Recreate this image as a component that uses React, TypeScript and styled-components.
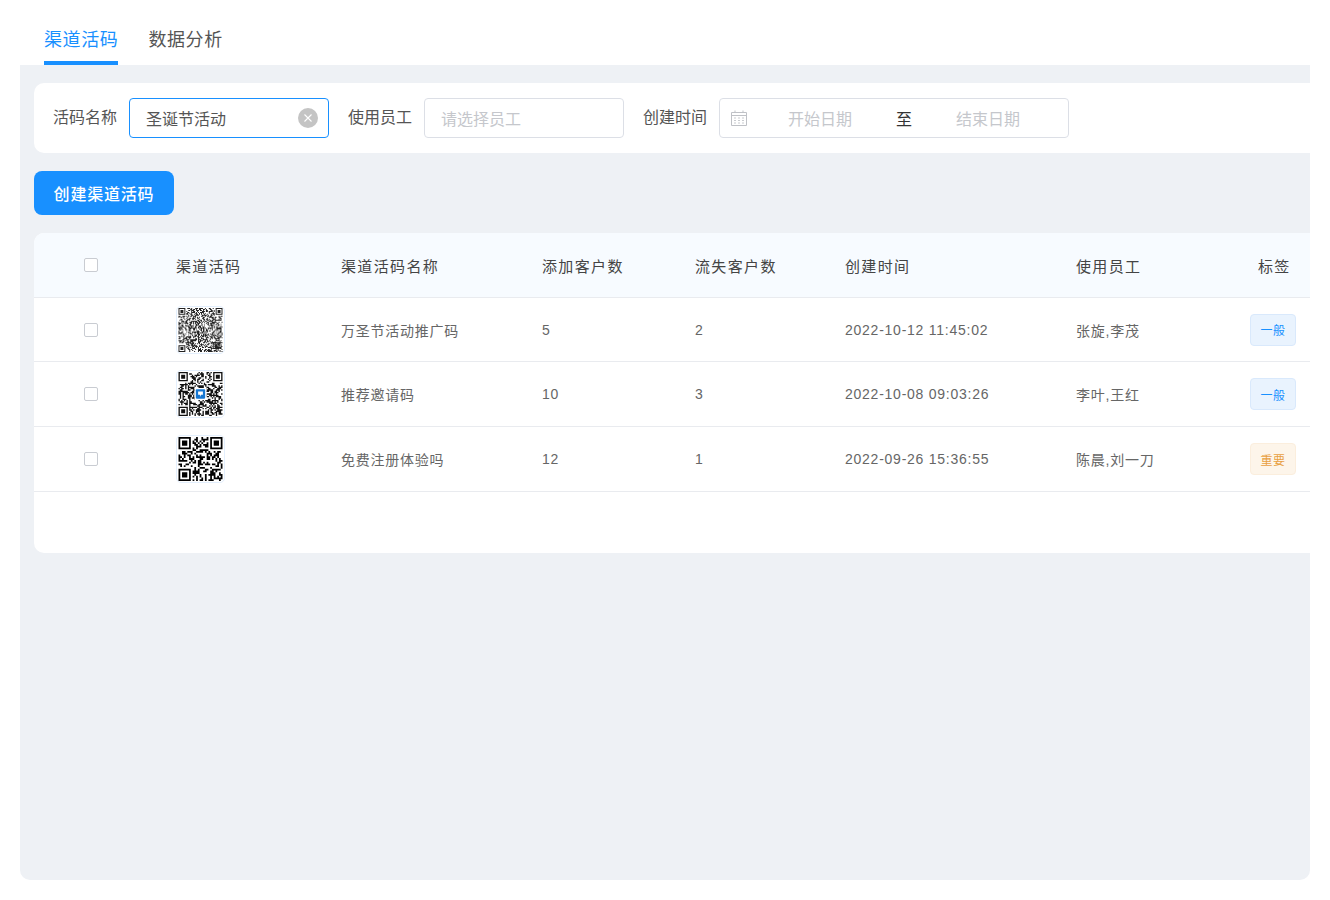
import React from 'react';
import styled, { createGlobalStyle } from 'styled-components';

const Global = createGlobalStyle`
  html, body { margin: 0; padding: 0; background: #fff; }
  body { font-family: "Liberation Sans", "Noto Sans CJK SC", sans-serif; color: #333; }
`;

const Page = styled.div`
  width: 1330px;
  height: 900px;
  padding: 0 20px 20px;
  box-sizing: border-box;
  display: flex;
  flex-direction: column;
`;
const Tabs = styled.div`
  height: 65px;
  display: flex;
  gap: 30px;
  padding-left: 24px;
  flex: none;
`;
const Tab = styled.div<{ $active?: boolean }>`
  font-size: 18px;
  letter-spacing: 0.6px;
  line-height: 26px;
  padding-top: 27px;
  box-sizing: border-box;
  height: 65px;
  color: ${p => (p.$active ? '#1890ff' : '#555')};
  border-bottom: 4px solid ${p => (p.$active ? '#1890ff' : 'transparent')};
`;
const Panel = styled.div`
  flex: 1;
  background: #eef1f5;
  border-radius: 0 0 10px 10px;
  padding: 18px 0 0 14px;
  overflow: hidden;
`;
const FilterCard = styled.div`
  height: 70px;
  box-sizing: border-box;
  margin-right: -12px;
  background: #fff;
  border-radius: 10px;
  padding: 15px 0 15px 19px;
  display: flex;
  align-items: center;
`;
const Label = styled.label`
  font-size: 16px;
  line-height: 40px;
  color: #555;
  margin-right: 12px;
`;
const Field = styled.div<{ $width: number; $focus?: boolean }>`
  width: ${p => p.$width}px;
  height: 40px;
  box-sizing: border-box;
  border: 1px solid ${p => (p.$focus ? '#1890ff' : '#dcdfe6')};
  border-radius: 4px;
  margin-right: 19px;
  display: flex;
  align-items: center;
  font-size: 16px;
  flex: none;
`;
const InputText = styled.span<{ $placeholder?: boolean }>`
  padding-left: 16px;
  flex: 1;
  color: ${p => (p.$placeholder ? '#c5c7cc' : '#555')};
`;
const ClearIcon = styled.svg`
  width: 20px;
  height: 20px;
  margin-right: 10px;
  flex: none;
`;
const CalendarIcon = styled.svg`
  width: 16px;
  height: 16px;
  margin-left: 11px;
  flex: none;
`;
const DateText = styled.span<{ $width: number; $placeholder?: boolean }>`
  width: ${p => p.$width}px;
  flex: none;
  text-align: center;
  color: ${p => (p.$placeholder ? '#c5c7cc' : '#333')};
`;
const CreateButton = styled.button`
  display: block;
  margin: 18px 0;
  width: 140px;
  height: 44px;
  border: 0;
  border-radius: 8px;
  background: #1890ff;
  color: #fff;
  font-family: inherit;
  font-size: 16px;
  font-weight: 500;
  letter-spacing: 0.8px;
  padding: 0;
`;
const TableCard = styled.div`
  height: 320px;
  margin-right: -12px;
  background: #fff;
  border-radius: 10px;
  overflow: hidden;
`;
const Row = styled.div<{ $head?: boolean }>`
  display: grid;
  grid-template-columns: 142px 165px 201px 153px 150px 231px 174px 1fr;
  align-items: center;
  box-sizing: border-box;
  height: ${p => (p.$head ? 65 : 65)}px;
  border-bottom: 1px solid #e9ebef;
  background: ${p => (p.$head ? '#f7fbff' : '#fff')};
  font-size: ${p => (p.$head ? 15 : 14)}px;
  letter-spacing: ${p => (p.$head ? 1.35 : 0.75)}px;
  color: ${p => (p.$head ? '#444' : '#666')};
  &:nth-child(2) { height: 64px; }
`;
const Cell = styled.div`
  min-width: 0;
  white-space: nowrap;
`;
const HeadTagCell = styled(Cell)`
  padding-left: 8px;
`;
const CheckCell = styled.div`
  padding-left: 50px;
  display: flex;
`;
const Check = styled.span`
  display: block;
  width: 14px;
  height: 14px;
  box-sizing: border-box;
  border: 1px solid #c9ccd2;
  border-radius: 2px;
  background: #fff;
`;
const QrBox = styled.div`
  width: 49px;
  height: 48px;
  box-sizing: border-box;
  border: 1px solid #e3effd;
  border-radius: 5px;
  padding: 1px;
  background: #fff;
`;
const QrSvg = styled.svg`
  display: block;
  width: 100%;
  height: 100%;
`;
const Tag = styled.span<{ $warn?: boolean }>`
  display: flex;
  align-items: center;
  justify-content: center;
  width: 46px;
  height: 32px;
  box-sizing: border-box;
  border-radius: 4px;
  font-size: 12px;
  letter-spacing: 0.5px;
  border: 1px solid ${p => (p.$warn ? '#fbeedd' : '#d9e9fc')};
  background: ${p => (p.$warn ? '#fdf5ea' : '#e9f3fe')};
  color: ${p => (p.$warn ? '#e8a043' : '#1890ff')};
`;

function buildQr(n: number, seed: number) {
  let s = seed;
  const rnd = () => {
    s = (s * 1664525 + 1013904223) >>> 0;
    return (s >>> 16) / 65536;
  };
  let d = '';
  const finder = (x: number, y: number) => {
    d += `M${x} ${y}h7v7h-7zM${x + 1} ${y + 1}v5h5v-5zM${x + 2} ${y + 2}h3v3h-3z`;
  };
  const inFinder = (x: number, y: number) =>
    (x < 8 && y < 8) || (x >= n - 8 && y < 8) || (x < 8 && y >= n - 8);
  for (let y = 0; y < n; y++)
    for (let x = 0; x < n; x++)
      if (!inFinder(x, y) && rnd() > 0.5) d += `M${x} ${y}h1v1h-1z`;
  finder(0, 0);
  finder(n - 7, 0);
  finder(0, n - 7);
  return d;
}

const QrCode: React.FC<{ size: number; seed: number; logo?: boolean; tone: string }> = ({ size, seed, logo, tone }) => (
  <QrBox>
    <QrSvg viewBox={`0 0 ${size} ${size}`}>
      <path d={buildQr(size, seed)} fill={tone} fillRule="evenodd" />
      {size === 45 && (
        <path d="M35 35h7v7h-7zM36 36v5h5v-5zM37 37h3v3h-3z" fill={tone} fillRule="evenodd" />
      )}
      {logo && (
        <g>
          <rect x={size / 2 - 4.5} y={size / 2 - 4.5} width="9" height="9" fill="#fff" />
          <rect x={size / 2 - 3.5} y={size / 2 - 3.5} width="7" height="7" rx="0.6" fill="#1677d2" />
          <path
            d={`M${size / 2 - 1.8} ${size / 2 - 1.8}h3.6v2.4h-1.4l-.8 1.6v-1.6h-1.4z`}
            fill="#fff"
          />
        </g>
      )}
    </QrSvg>
  </QrBox>
);

const rows = [
  { qr: { size: 45, seed: 7, tone: '#222' }, name: '万圣节活动推广码', add: '5', lost: '2', time: '2022-10-12 11:45:02', staff: '张旋,李茂', tag: '一般', warn: false },
  { qr: { size: 33, seed: 21, tone: '#111', logo: true }, name: '推荐邀请码', add: '10', lost: '3', time: '2022-10-08 09:03:26', staff: '李叶,王红', tag: '一般', warn: false },
  { qr: { size: 25, seed: 99, tone: '#000' }, name: '免费注册体验吗', add: '12', lost: '1', time: '2022-09-26 15:36:55', staff: '陈晨,刘一刀', tag: '重要', warn: true },
];

export default function App() {
  return (
    <Page>
      <Global />
      <Tabs>
        <Tab $active>渠道活码</Tab>
        <Tab>数据分析</Tab>
      </Tabs>
      <Panel>
        <FilterCard>
          <Label>活码名称</Label>
          <Field $width={200} $focus>
            <InputText>圣诞节活动</InputText>
            <ClearIcon viewBox="0 0 20 20">
              <circle cx="10" cy="10" r="10" fill="#c4c4c4" />
              <path d="M6.5 6.5l7 7M13.5 6.5l-7 7" stroke="#fff" strokeWidth="1.1" />
            </ClearIcon>
          </Field>
          <Label>使用员工</Label>
          <Field $width={200}>
            <InputText $placeholder>请选择员工</InputText>
          </Field>
          <Label>创建时间</Label>
          <Field $width={350}>
            <CalendarIcon viewBox="0 0 16 16" fill="none">
              <path d="M.5 2.5h15v13H.5zM.5 5.5h15" stroke="#bfc1c6" />
              <path d="M4 0.5v2M12 0.5v2" stroke="#bfc1c6" />
              <path d="M3 8h2M7 8h2M11 8h2M3 10.5h2M7 10.5h2M11 10.5h2M3 13h2M7 13h2M11 13h2" stroke="#c9cbcf" />
            </CalendarIcon>
            <DateText $width={146} $placeholder>开始日期</DateText>
            <DateText $width={22}>至</DateText>
            <DateText $width={146} $placeholder>结束日期</DateText>
          </Field>
        </FilterCard>
        <CreateButton>创建渠道活码</CreateButton>
        <TableCard>
          <Row $head>
            <CheckCell><Check /></CheckCell>
            <Cell>渠道活码</Cell>
            <Cell>渠道活码名称</Cell>
            <Cell>添加客户数</Cell>
            <Cell>流失客户数</Cell>
            <Cell>创建时间</Cell>
            <Cell>使用员工</Cell>
            <HeadTagCell>标签</HeadTagCell>
          </Row>
          {rows.map(r => (
            <Row key={r.name}>
              <CheckCell><Check /></CheckCell>
              <Cell><QrCode {...r.qr} /></Cell>
              <Cell>{r.name}</Cell>
              <Cell>{r.add}</Cell>
              <Cell>{r.lost}</Cell>
              <Cell>{r.time}</Cell>
              <Cell>{r.staff}</Cell>
              <Cell><Tag $warn={r.warn}>{r.tag}</Tag></Cell>
            </Row>
          ))}
        </TableCard>
      </Panel>
    </Page>
  );
}
